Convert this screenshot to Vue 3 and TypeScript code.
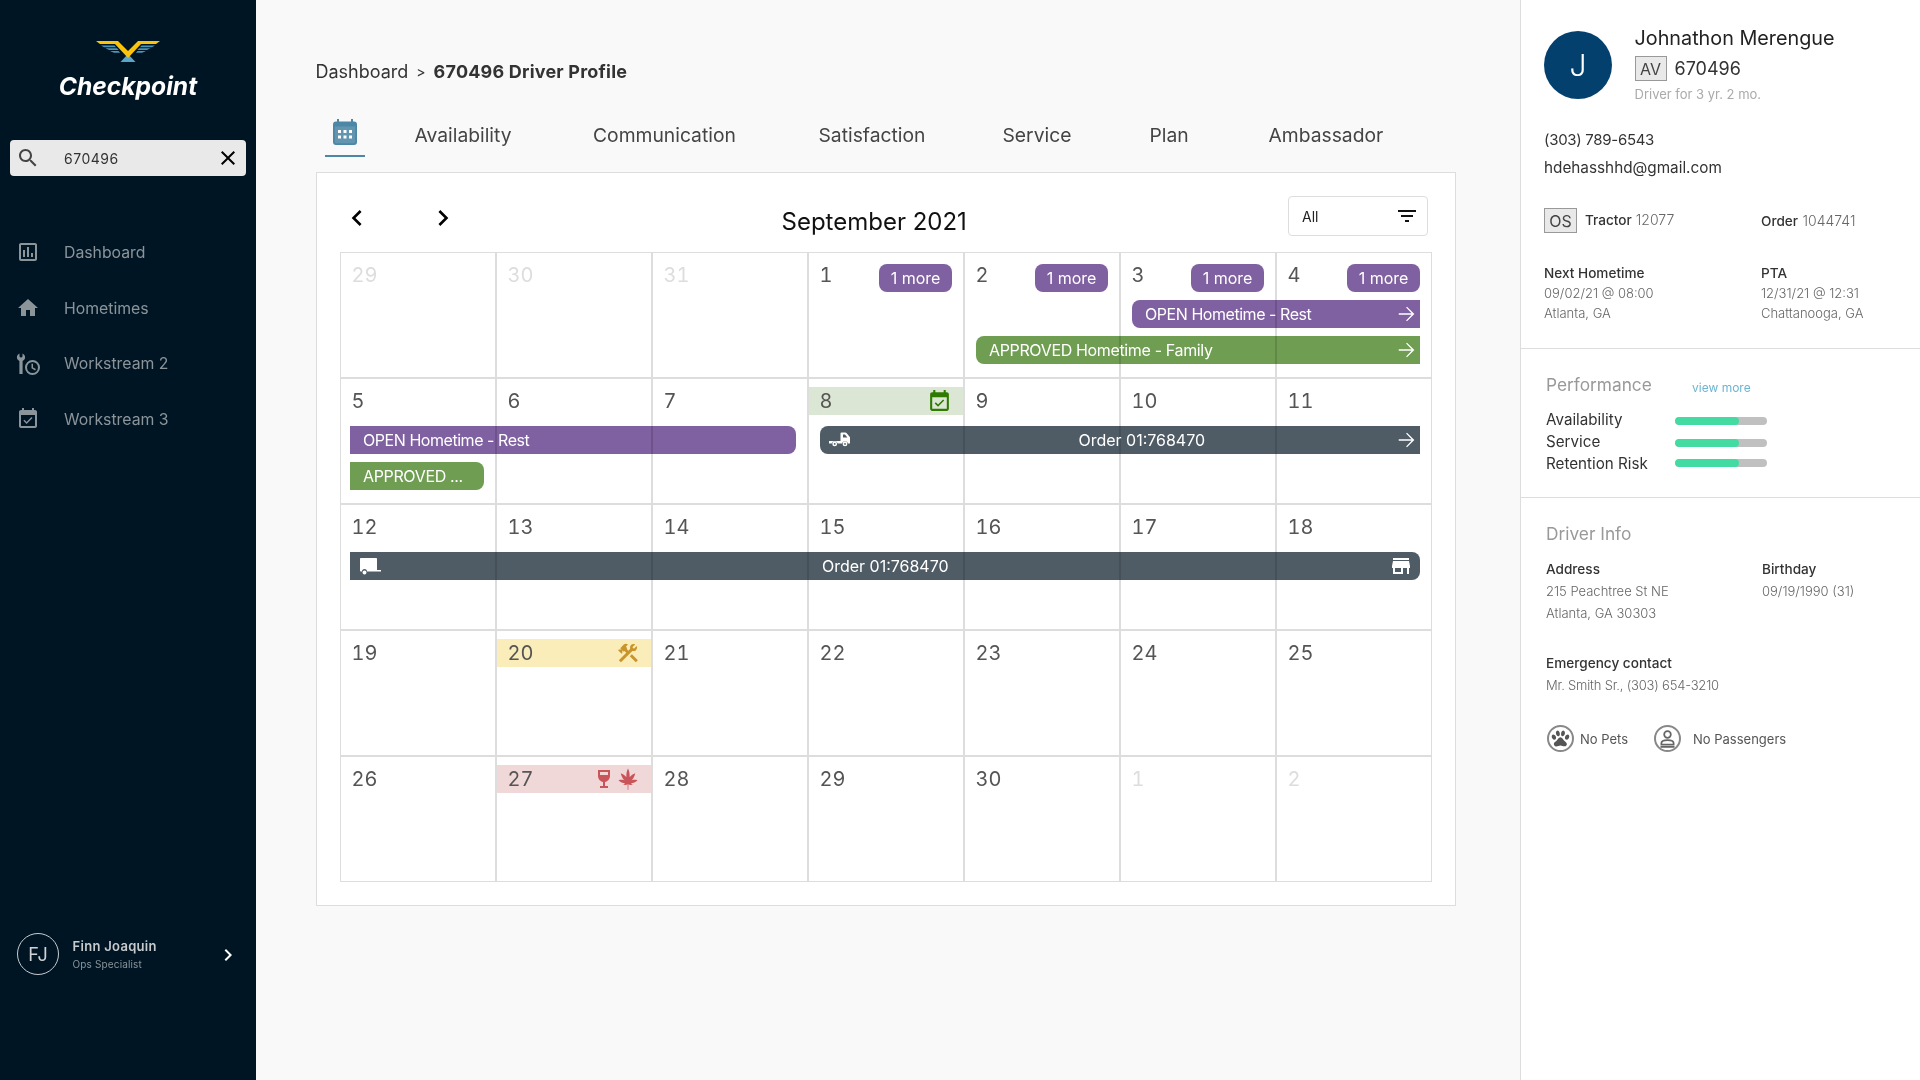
<script setup lang="ts">
const icons: Record<string, string> = {
  search: 'M15.5 14h-.79l-.28-.27C15.41 12.59 16 11.11 16 9.5 16 5.91 13.09 3 9.5 3S3 5.91 3 9.5 5.91 16 9.5 16c1.61 0 3.09-.59 4.23-1.57l.27.28v.79l5 4.99L20.49 19l-4.99-5zm-6 0C7.01 14 5 11.99 5 9.5S7.01 5 9.5 5 14 7.01 14 9.5 11.99 14 9.5 14z',
  close: 'M19 6.41L17.59 5 12 10.59 6.41 5 5 6.41 10.59 12 5 17.59 6.41 19 12 13.41 17.59 19 19 17.59 13.41 12z',
  poll: 'M19 3H5c-1.1 0-2 .9-2 2v14c0 1.1.9 2 2 2h14c1.1 0 2-.9 2-2V5c0-1.1-.9-2-2-2zm0 16H5V5h14v14zM7 10h2v7H7zm4-3h2v10h-2zm4 6h2v4h-2z',
  home: 'M10 20v-6h4v6h5v-8h3L12 3 2 12h3v8z',
  check: 'M16.53 11.06L15.47 10l-4.88 4.88-2.12-2.12-1.06 1.06L10.59 17l5.94-5.94zM19 3h-1V1h-2v2H8V1H6v2H5c-1.11 0-1.99.9-1.99 2L3 19c0 1.1.89 2 2 2h14c1.1 0 2-.9 2-2V5c0-1.1-.9-2-2-2zm0 16H5V8h14v11z',
  left: 'M15.41 7.41L14 6l-6 6 6 6 1.41-1.41L10.83 12z',
  right: 'M10 6L8.59 7.41 13.17 12l-4.58 4.59L10 18l6-6z',
  filter: 'M10 18h4v-2h-4v2zM3 6v2h18V6H3zm3 7h12v-2H6v2z',
  arrow: 'M12 4l-1 1L17 11.2H3v1.6h14L11 19l1 1 8-8z',
  store: 'M20 4H4v2h16V4zm1 10v-2l-1-5H4l-1 5v2h1v6h10v-6h4v6h2v-6h1zm-9 4H6v-4h6v4z',
  tools: 'M13.78 15.3L19.78 21.3L21.89 19.14L15.89 13.14L13.78 15.3M17.5 10.1C17.11 10.1 16.69 10.05 16.36 9.91L4.97 21.25L2.86 19.14L10.27 11.74L8.5 9.96L7.78 10.66L6.33 9.25V12.11L5.63 12.81L2.11 9.25L2.81 8.55H5.62L4.22 7.14L7.78 3.58C8.95 2.41 10.83 2.41 12 3.58L9.89 5.74L11.3 7.14L10.59 7.85L12.38 9.63L14.2 7.75C14.06 7.42 14 7 14 6.63C14 4.66 15.56 3.11 17.5 3.11C18.09 3.11 18.61 3.25 19.08 3.53L16.41 6.2L17.91 7.7L20.58 5.03C20.86 5.5 21 6 21 6.63C21 8.55 19.45 10.1 17.5 10.1Z',
  wine: 'M6 3v6c0 2.97 2.16 5.43 5 5.91V19H8v2h8v-2h-3v-4.09c2.84-.48 5-2.94 5-5.91V3H6zm10 5H8V5h8v3z',
  leaf: 'M12 1.5c1.3 2.6 1.9 5.4 1.6 8.6 1.5-1.8 3.400-3.100 5.600-3.900-.6 3-1.900 5.400-3.600 7.100 1.700-.5 3.500-.6 5.900-.1-1.900 1.900-4.100 2.900-6.600 2.900l1.800 1.500c-1.600.6-3.200.4-4.300-.4l-.1 5.800h-.6l-.1-5.800c-1.100.8-2.700 1-4.300.4l1.800-1.500c-2.500 0-4.700-1-6.600-2.900 2.400-.5 4.200-.4 5.900.1-1.700-1.700-3-4.100-3.600-7.100 2.200.8 4.100 2.100 5.600 3.900-.3-3.200.3-6 1.600-8.600z',
  truck: 'M1 13h11.500V5.500a1 1 0 0 1 1-1h3.800c.5 0 .9.200 1.200.6l3.300 3.900c.1.200.2.400.2.600V15.500h-2a3.100 3.100 0 0 0-6 0H9.700a3.100 3.100 0 0 0-6 0H1zM15 6.500V9.500h4.400L17 6.500zM6.700 13.500a2.400 2.400 0 1 1 0 4.800 2.400 2.400 0 0 1 0-4.800zm0 1.500a.9.9 0 1 0 0 1.800.9.9 0 0 0 0-1.800zM17 13.500a2.400 2.400 0 1 1 0 4.800 2.400 2.400 0 0 1 0-4.800zm0 1.500a.9.9 0 1 0 0 1.800.9.9 0 0 0 0-1.800z',
  trailer: 'M3 4h15c.6 0 1 .4 1 1v11h4v1.500H9a2.500 2.500 0 0 0-5 0H3c-.6 0-1-.4-1-1V5c0-.6.4-1 1-1zM6.500 16.500a2 2 0 1 1 0 4 2 2 0 0 1 0-4z',
  paw: 'M8.35,3C9.53,2.83 10.78,4.12 11.14,5.9C11.5,7.67 10.85,9.25 9.67,9.43C8.5,9.61 7.24,8.32 6.87,6.54C6.5,4.77 7.17,3.19 8.35,3M15.5,3C16.69,3.19 17.35,4.77 17,6.54C16.62,8.32 15.37,9.61 14.19,9.43C13,9.25 12.35,7.67 12.72,5.9C13.08,4.12 14.33,2.83 15.5,3M3,7.6C4.14,7.11 5.69,8 6.5,9.55C7.26,11.13 7,12.79 5.87,13.28C4.74,13.77 3.2,12.89 2.41,11.32C1.62,9.75 1.9,8.08 3,7.6M21,7.6C22.1,8.08 22.38,9.75 21.59,11.32C20.8,12.89 19.26,13.77 18.13,13.28C17,12.79 16.74,11.13 17.5,9.55C18.31,8 19.86,7.11 21,7.6M19.33,18.38C19.37,19.32 18.65,20.36 17.79,20.75C16,21.57 13.88,19.87 11.89,19.87C9.9,19.87 7.76,21.64 6,20.75C5,20.26 4.31,18.96 4.44,17.88C4.62,16.39 6.41,15.59 7.47,14.5C8.88,13.09 9.88,10.44 11.89,10.44C13.89,10.44 14.95,13.05 16.3,14.5C17.41,15.72 19.26,16.75 19.33,18.38Z',
}

const nav = [
  { label: 'Dashboard', icon: 'poll' },
  { label: 'Hometimes', icon: 'home' },
  { label: 'Workstream 2', icon: '' },
  { label: 'Workstream 3', icon: 'check' },
]
const tabs = [
  { label: 'Availability', slot: 178.5 },
  { label: 'Communication', slot: 225.5 },
  { label: 'Satisfaction', slot: 184 },
  { label: 'Service', slot: 147 },
  { label: 'Plan', slot: 119 },
  { label: 'Ambassador', slot: 120 },
]

interface Day { n: number; dim?: boolean; more?: boolean; tone?: string; marks?: string[] }
interface Ev {
  col: number; span: number; row: number; tone: string; text: string
  from?: boolean; to?: boolean; lead?: string; trail?: string; center?: string; first?: boolean
}
interface Week { days: Day[]; events: Ev[] }

const d = (n: number, extra: Partial<Day> = {}): Day => ({ n, ...extra })

const weeks: Week[] = [
  {
    days: [d(29, { dim: true }), d(30, { dim: true }), d(31, { dim: true }), d(1, { more: true }), d(2, { more: true }), d(3, { more: true }), d(4, { more: true })],
    events: [
      { col: 6, span: 2, row: 2, tone: 'purple', text: 'OPEN Hometime - Rest', from: true, trail: 'arrow' },
      { col: 5, span: 3, row: 4, tone: 'green', text: 'APPROVED Hometime - Family', from: true, trail: 'arrow' },
    ],
  },
  {
    days: [d(5), d(6), d(7), d(8, { tone: 'ok', marks: ['check'] }), d(9), d(10), d(11)],
    events: [
      { col: 1, span: 3, row: 2, tone: 'purple', text: 'OPEN Hometime - Rest', to: true, first: true },
      { col: 1, span: 1, row: 4, tone: 'green', text: 'APPROVED ...', to: true, first: true },
      { col: 4, span: 4, row: 2, tone: 'slate', text: 'Order 01:768470', from: true, lead: 'truck', trail: 'arrow', center: 'offset' },
    ],
  },
  {
    days: [d(12), d(13), d(14), d(15), d(16), d(17), d(18)],
    events: [
      { col: 1, span: 7, row: 2, tone: 'slate', text: 'Order 01:768470', to: true, lead: 'trailer', trail: 'store', center: 'true', first: true },
    ],
  },
  { days: [d(19), d(20, { tone: 'warn', marks: ['tools'] }), d(21), d(22), d(23), d(24), d(25)], events: [] },
  { days: [d(26), d(27, { tone: 'bad', marks: ['wine', 'leaf'] }), d(28), d(29), d(30), d(1, { dim: true }), d(2, { dim: true })], events: [] },
]

const bars = [
  { label: 'Availability', value: 70 },
  { label: 'Service', value: 70 },
  { label: 'Retention Risk', value: 70 },
]

const place = (e: Ev) => ({ gridColumn: `${e.col} / span ${e.span}`, gridRow: String(e.row) })
</script>

<template>
  <div class="app">
    <aside class="side">
      <div class="brand">
        <svg class="wings" width="64" height="21" viewBox="0 0 64 21">
          <path fill="#5ba6c8" d="M32 13l7.500 8H24.500z" />
          <path fill="#4e93b4" d="M5 4.500h13.500l1.600 1.800H8zM59 4.500H45.500l-1.600 1.800H56zM9.500 7.200h11.500l1.600 1.800H13zM54.500 7.200H43l-1.600 1.800H51zM14 9.900h8.500l1.600 1.800H18zM50 9.900h-8.500l-1.600 1.800H46z" />
          <path fill="#fcc30b" d="M0 0h22l10 10L42 0h22l-4 3H45L32 17 19 3H4z" />
        </svg>
        <div class="brand-name">Checkpoint</div>
      </div>
      <div class="search">
        <svg class="search-ic" viewBox="0 0 24 24"><path :d="icons.search" /></svg>
        <span class="search-val">670496</span>
        <svg class="search-x" viewBox="0 0 24 24"><path :d="icons.close" /></svg>
      </div>
      <nav class="nav">
        <div v-for="item in nav" :key="item.label" class="nav-item">
          <span class="nav-ic">
            <svg v-if="item.icon" viewBox="0 0 24 24"><path :d="icons[item.icon]" /></svg>
            <svg v-else viewBox="0 0 24 24">
              <path d="M3.500 1.500v3l1.500 1.200L6.500 4.500v-3c1.600.7 2.600 2.200 2.600 3.800 0 1.700-1 3-2.500 3.700V22H3.400V9C1.900 8.300.9 7 .9 5.300c0-1.600 1-3.100 2.600-3.800z" />
              <path d="M16.500 8a7.500 7.500 0 1 0 0 15 7.500 7.500 0 0 0 0-15zm0 2a5.500 5.500 0 1 1 0 11 5.500 5.500 0 0 1 0-11zm-1 1.800v4.500l3.600 2.100.8-1.300-2.900-1.700v-3.600z" />
            </svg>
          </span>
          <span>{{ item.label }}</span>
        </div>
      </nav>
      <div class="user">
        <div class="user-av">FJ</div>
        <div class="user-text">
          <div class="user-name">Finn Joaquin</div>
          <div class="user-role">Ops Specialist</div>
        </div>
        <svg class="user-chev" viewBox="0 0 24 24"><path :d="icons.right" /></svg>
      </div>
    </aside>

    <main class="main">
      <div class="crumb">
        <span>Dashboard</span>
        <span class="crumb-sep">&gt;</span>
        <strong>670496 Driver Profile</strong>
      </div>
      <div class="tabs">
        <div class="tab-cal">
          <svg width="24" height="26" viewBox="0 0 24 26">
            <path fill="#4d87a6" d="M4 0h2v2.500h12V0h2v2.500h1a3 3 0 0 1 3 3V23a3 3 0 0 1-3 3H3a3 3 0 0 1-3-3V5.500a3 3 0 0 1 3-3h1z" />
            <path fill="#fff" d="M1.800 7.500h20.400V23c0 .7-.5 1.200-1.200 1.200H3c-.7 0-1.200-.5-1.200-1.200z" opacity=".12" />
            <path fill="#fff" d="M5 11h3v3H5zM10.500 11h3v3h-3zM16 11h3v3h-3zM5 16.500h3v3H5zM10.500 16.500h3v3h-3zM16 16.500h3v3h-3z" />
          </svg>
        </div>
        <div class="tab-list">
          <span v-for="t in tabs" :key="t.label" :style="{ width: t.slot + 'px' }">{{ t.label }}</span>
        </div>
      </div>

      <section class="card">
        <header class="cal-head">
          <div class="chevs">
            <svg viewBox="0 0 24 24"><path :d="icons.left" /></svg>
            <svg viewBox="0 0 24 24"><path :d="icons.right" /></svg>
          </div>
          <h1 class="cal-title">September 2021</h1>
          <div class="filter">
            <span>All</span>
            <svg viewBox="0 0 24 24"><path :d="icons.filter" /></svg>
          </div>
        </header>
        <div class="board">
          <div v-for="(w, wi) in weeks" :key="wi" class="week">
            <div v-for="(day, di) in w.days" :key="di" class="cell" :style="{ gridColumn: String(di + 1) }">
              <div class="head" :class="day.tone">
                <span class="num" :class="{ dim: day.dim }">{{ day.n }}</span>
                <span v-if="day.more" class="more">1 more</span>
                <span v-if="day.marks" class="marks">
                  <svg v-for="m in day.marks" :key="m" viewBox="0 0 24 24"><path :d="icons[m]" /></svg>
                </span>
              </div>
            </div>
            <div
              v-for="(e, ei) in w.events"
              :key="ei"
              class="ev"
              :class="[e.tone, { from: e.from, to: e.to, first: e.first, centered: e.center }]"
              :style="place(e)"
            >
              <svg v-if="e.lead" class="lead" viewBox="0 0 24 24"><path :d="icons[e.lead]" /></svg>
              <span class="ev-text" :class="{ shift: e.center === 'offset' }">{{ e.text }}</span>
              <svg v-if="e.trail" class="trail" :class="e.trail" viewBox="0 0 24 24"><path :d="icons[e.trail]" /></svg>
            </div>
          </div>
        </div>
      </section>
    </main>

    <aside class="panel">
      <section class="sec sec-a">
        <div class="who">
          <div class="avatar">J</div>
          <div>
            <div class="name">Johnathon Merengue</div>
            <div class="idrow"><span class="badge">AV</span><span class="id">670496</span></div>
            <div class="tenure">Driver for 3 yr. 2 mo.</div>
          </div>
        </div>
        <div class="phone">(303) 789-6543</div>
        <div class="email">hdehasshhd@gmail.com</div>
        <div class="meta">
          <div class="meta-a"><span class="badge os">OS</span><span class="k">Tractor</span> <span class="v">12077</span></div>
          <div class="meta-b"><span class="k">Order</span> <span class="v">1044741</span></div>
        </div>
        <div class="times">
          <div>
            <div class="k">Next Hometime</div>
            <div class="v">09/02/21 @ 08:00</div>
            <div class="v">Atlanta, GA</div>
          </div>
          <div>
            <div class="k">PTA</div>
            <div class="v">12/31/21 @ 12:31</div>
            <div class="v">Chattanooga, GA</div>
          </div>
        </div>
      </section>
      <section class="sec sec-b">
        <div class="perf-head">
          <h2>Performance</h2>
          <span class="view">view more</span>
        </div>
        <div class="bars">
          <div v-for="b in bars" :key="b.label" class="bar-row">
            <span class="bar-label">{{ b.label }}</span>
            <span class="bar"><span class="fill" :style="{ width: b.value + '%' }"></span></span>
          </div>
        </div>
      </section>
      <section class="sec sec-c">
        <h2>Driver Info</h2>
        <div class="info">
          <div>
            <div class="k">Address</div>
            <div class="v">215 Peachtree St NE</div>
            <div class="v">Atlanta, GA 30303</div>
          </div>
          <div>
            <div class="k">Birthday</div>
            <div class="v">09/19/1990 (31)</div>
          </div>
        </div>
        <div class="contact">
          <div class="k">Emergency contact</div>
          <div class="v tight">Mr. Smith Sr., (303) 654-3210</div>
        </div>
        <div class="flags">
          <span class="flag">
            <span class="ring"><svg viewBox="0 0 24 24"><path :d="icons.paw" /></svg></span>
            <span>No Pets</span>
          </span>
          <span class="flag two">
            <span class="ring">
              <svg viewBox="0 0 24 24" class="person">
                <circle cx="12" cy="7.500" r="3.800" />
                <path d="M5 19v-1.500c0-2.400 3.500-3.700 7-3.700s7 1.300 7 3.700V19zM4 21.500h16" />
              </svg>
            </span>
            <span>No Passengers</span>
          </span>
        </div>
      </section>
    </aside>
  </div>
</template>

<style>
html, body { margin: 0; padding: 0; background: #f9f9f9; }
</style>

<style scoped>
* { box-sizing: border-box; }
.app {
  display: flex;
  width: 1920px;
  height: 1080px;
  overflow: hidden;
  font-family: Inter, "Liberation Sans", sans-serif;
  color: #333;
  background: #f9f9f9;
}

/* sidebar */
.side {
  width: 256px;
  flex: none;
  background: #001524;
  display: flex;
  flex-direction: column;
  padding: 41px 10px 105px;
}
.brand { display: flex; flex-direction: column; align-items: center; }
.wings { display: block; }
.brand-name {
  margin-top: 9px;
  color: #fff;
  font-size: 24.600px;
  line-height: 30px;
  font-weight: 700;
  font-style: italic;
}
.search {
  margin-top: 39px;
  height: 36px;
  background: #e9e9e9;
  border-radius: 4px;
  display: flex;
  align-items: center;
  padding: 0 6px 0 6px;
}
.search-ic { width: 24px; height: 24px; fill: #444; }
.search-val { margin-left: 24px; font-size: 14px; letter-spacing: .5px; color: #333; flex: 1; }
.search-x { width: 24px; height: 24px; fill: #000; }
.nav { margin-top: 48.600px; display: flex; flex-direction: column; }
.nav-item {
  height: 55.67px;
  display: flex;
  align-items: center;
  color: #8b9499;
  font-size: 15.800px;
}
.nav-ic { width: 24px; height: 24px; margin: 0 24px 0 6px; flex: none; }
.nav-ic svg { display: block; width: 24px; height: 24px; fill: #8b9499; }
.user { margin-top: auto; display: flex; align-items: center; padding-left: 7px; }
.user-av {
  width: 42px;
  height: 42px;
  flex: none;
  border: 1.500px solid #c8cbcd;
  border-radius: 50%;
  display: flex;
  align-items: center;
  justify-content: center;
  color: #d0d3d5;
  font-size: 18px;
}
.user-text { margin-left: 13.500px; flex: 1; }
.user-name { color: #c8cbcd; font-size: 13px; line-height: 17px; font-weight: 600; letter-spacing: .3px; }
.user-role { color: #8b9499; font-size: 10px; line-height: 14px; margin-top: 2px; letter-spacing: .15px; }
.user-chev { width: 24px; height: 24px; fill: #fff; margin: 2px 6px 0 0; }

/* main */
.main { width: 1264px; flex: none; padding: 60px 0 0 60px; }
.crumb { display: flex; align-items: center; font-size: 18px; line-height: 24px; color: #333; margin-left: -.5px; }
.crumb-sep { margin: 0 8px; font-size: 14px; }
.crumb strong { font-weight: 700; letter-spacing: .2px; }
.tabs { display: flex; margin-top: 35px; height: 38px; }
.tab-cal {
  width: 40px;
  height: 38px;
  margin-left: 9px;
  display: flex;
  justify-content: center;
  border-bottom: 2px solid #4d87a6;
}
.tab-list { display: flex; margin-left: 49.500px; font-size: 19.300px; line-height: 32px; color: #444; }
.tab-list span { white-space: nowrap; }
.card {
  width: 1140px;
  height: 734px;
  margin-top: 15px;
  background: #fff;
  border: 1px solid #ddd;
  padding: 0 23px;
}
.cal-head { height: 79px; display: flex; align-items: flex-start; }
.chevs { display: flex; gap: 54px; padding: 29px 0 0 1px; }
.chevs svg { width: 32px; height: 32px; fill: #000; display: block; }
.cal-title {
  margin: 34px 0 0 322.500px;
  font-size: 24px;
  line-height: 30px;
  font-weight: 400;
  color: #111;
}
.filter {
  margin: 23px 4px 0 auto;
  width: 140px;
  height: 40px;
  border: 1px solid #ddd;
  border-radius: 4px;
  display: flex;
  align-items: center;
  justify-content: space-between;
  padding: 0 8px 0 13px;
  font-size: 14px;
  color: #222;
}
.filter svg { width: 24px; height: 24px; fill: #111; }

/* calendar */
.board {
  width: 1092px;
  height: 630px;
  background: #ddd;
  padding: 1px;
  display: flex;
  flex-direction: column;
  gap: 2px;
}
.week {
  flex: 1;
  display: grid;
  grid-template-columns: repeat(7, 154px);
  column-gap: 2px;
  grid-template-rows: 47px 28px 8px 28px 1fr;
}
.cell { grid-row: 1 / -1; background: #fff; min-height: 0; }
.head {
  margin-top: 8px;
  height: 28px;
  padding: 0 11px 0 10.500px;
  display: flex;
  align-items: center;
  justify-content: space-between;
}
.head.ok { background: #dbe7d4; }
.head.warn { background: #fbedb9; }
.head.bad { background: #f0d7d8; }
.num { font-size: 20px; color: #555; font-variant-numeric: tabular-nums; }
.num.dim { color: #ddd; }
.more {
  margin-top: 6px;
  height: 28px;
  width: 73px;
  border-radius: 8px;
  background: #7f60a0;
  color: #fff;
  font-size: 16px;
  display: flex;
  align-items: center;
  justify-content: center;
}
.marks { display: flex; }
.marks svg { width: 24px; height: 24px; display: block; }
.ok .marks svg { fill: #2f7a00; width: 25px; height: 25px; }
.warn .marks svg { fill: #c9952b; }
.bad .marks svg { fill: #c9555a; }

.ev {
  position: relative;
  margin: 0 11px;
  display: flex;
  align-items: center;
  color: #fff;
  font-size: 16px;
  padding: 0 5px 0 13px;
  min-width: 0;
}
.ev::before { content: ""; position: absolute; inset: 0; border-radius: inherit; mix-blend-mode: multiply; }
.ev.first { margin-left: 9px; }
.ev.from { border-radius: 8px 0 0 8px; }
.ev.to { border-radius: 0 8px 8px 0; }
.ev.purple::before { background: #7f60a0; }
.ev.green::before { background: #6f9d52; }
.ev.slate::before { background: #4f5c65; }
.ev.purple .ev-text { letter-spacing: -.45px; }
.ev.green .ev-text { letter-spacing: -.35px; }
.ev > * { position: relative; }
.ev-text { white-space: nowrap; }
.centered { justify-content: space-between; padding-left: 8px; }
.centered .ev-text.shift { margin-left: 36px; }
.lead { width: 24px; height: 24px; fill: #fff; fill-rule: evenodd; }
.trail { width: 22px; height: 22px; fill: #fff; flex: none; }
.trail.arrow { margin: 0 -2.500px 0 auto; }
.trail.store { width: 24px; height: 24px; margin-right: 2.500px; }
.centered .trail.arrow { margin-left: 0; }

/* right panel */
.panel { width: 400px; flex: none; background: #fff; border-left: 1px solid #ddd; }
.sec { border-bottom: 1px solid #ddd; }
.sec-c { border-bottom: 0; }
.k { color: #333; font-size: 13.600px; font-weight: 500; }
.v { color: #666; font-size: 13px; font-weight: 300; }
.v.tight { letter-spacing: -.2px; }
.sec-a { height: 349px; padding: 26px 0 0 23px; }
.who { display: flex; gap: 22.500px; }
.avatar {
  width: 68px;
  height: 68px;
  margin-top: 5px;
  border-radius: 50%;
  background: #03406e;
  color: #fff;
  font-size: 30px;
  font-weight: 300;
  display: flex;
  align-items: center;
  justify-content: center;
  flex: none;
}
.name { font-size: 19.800px; line-height: 24px; color: #222; }
.idrow { display: flex; align-items: center; margin-top: 6px; }
.badge {
  display: inline-flex;
  align-items: center;
  justify-content: center;
  width: 32px;
  height: 25px;
  background: #e9e9e9;
  border: 1px solid #999;
  color: #444;
  font-size: 16px;
}
.id { margin-left: 8px; font-size: 18px; color: #333; }
.tenure { margin-top: 3px; font-size: 13px; line-height: 20px; color: #aaa; }
.phone { margin-top: 26px; font-size: 15px; letter-spacing: -.3px; line-height: 20px; color: #333; }
.email { margin-top: 8px; font-size: 15.300px; line-height: 20px; color: #333; }
.meta { display: grid; grid-template-columns: 217px 1fr; margin-top: 30px; align-items: center; }
.meta-a { display: flex; align-items: center; gap: 4px; }
.meta-a .k, .meta-a .v, .meta-b { margin-top: -2px; }
.meta .v { font-size: 14px; }
.badge.os { width: 33px; margin: 0 4px 0 0; }
.times { display: grid; grid-template-columns: 217px 1fr; margin-top: 30px; line-height: 20px; }
.sec-b { height: 149px; padding: 24px 0 0 25px; }
.perf-head { display: flex; align-items: center; height: 24px; }
h2 { margin: 0; font-size: 17.300px; line-height: 24px; font-weight: 400; color: #999; }
.perf-head h2 { width: 146px; }
.view { font-size: 12px; color: #6db5d3; margin-top: 5px; }
.bars { margin-top: 11px; }
.bar-row { display: flex; align-items: center; height: 22px; font-size: 15.200px; color: #333; }
.bar-label { width: 129px; }
.bar {
  width: 92px;
  height: 8px;
  margin-top: 4px;
  background: #c0c0c0;
  border-radius: 4px;
  overflow: hidden;
  display: block;
}
.bar-row:last-child .bar { margin-top: 0; }
.fill { display: block; height: 100%; background: #44dba3; border-radius: 4px; }
.sec-c { padding: 24px 0 0 25px; }
.info { display: grid; grid-template-columns: 216px 1fr; margin-top: 12px; line-height: 22px; }
.contact { margin-top: 28px; line-height: 22px; }
.flags { display: flex; margin-top: 29px; font-size: 13px; color: #555; font-weight: 400; }
.flag { display: flex; align-items: center; gap: 6px; width: 106px; margin-left: 1px; }
.flag.two { gap: 12px; width: auto; }
.ring {
  width: 27px;
  height: 27px;
  border: 2.500px solid #888;
  border-radius: 50%;
  display: flex;
  align-items: center;
  justify-content: center;
  flex: none;
}
.ring svg { width: 21px; height: 21px; fill: #555; }
.ring .person { fill: none; stroke: #666; stroke-width: 2; }
</style>
